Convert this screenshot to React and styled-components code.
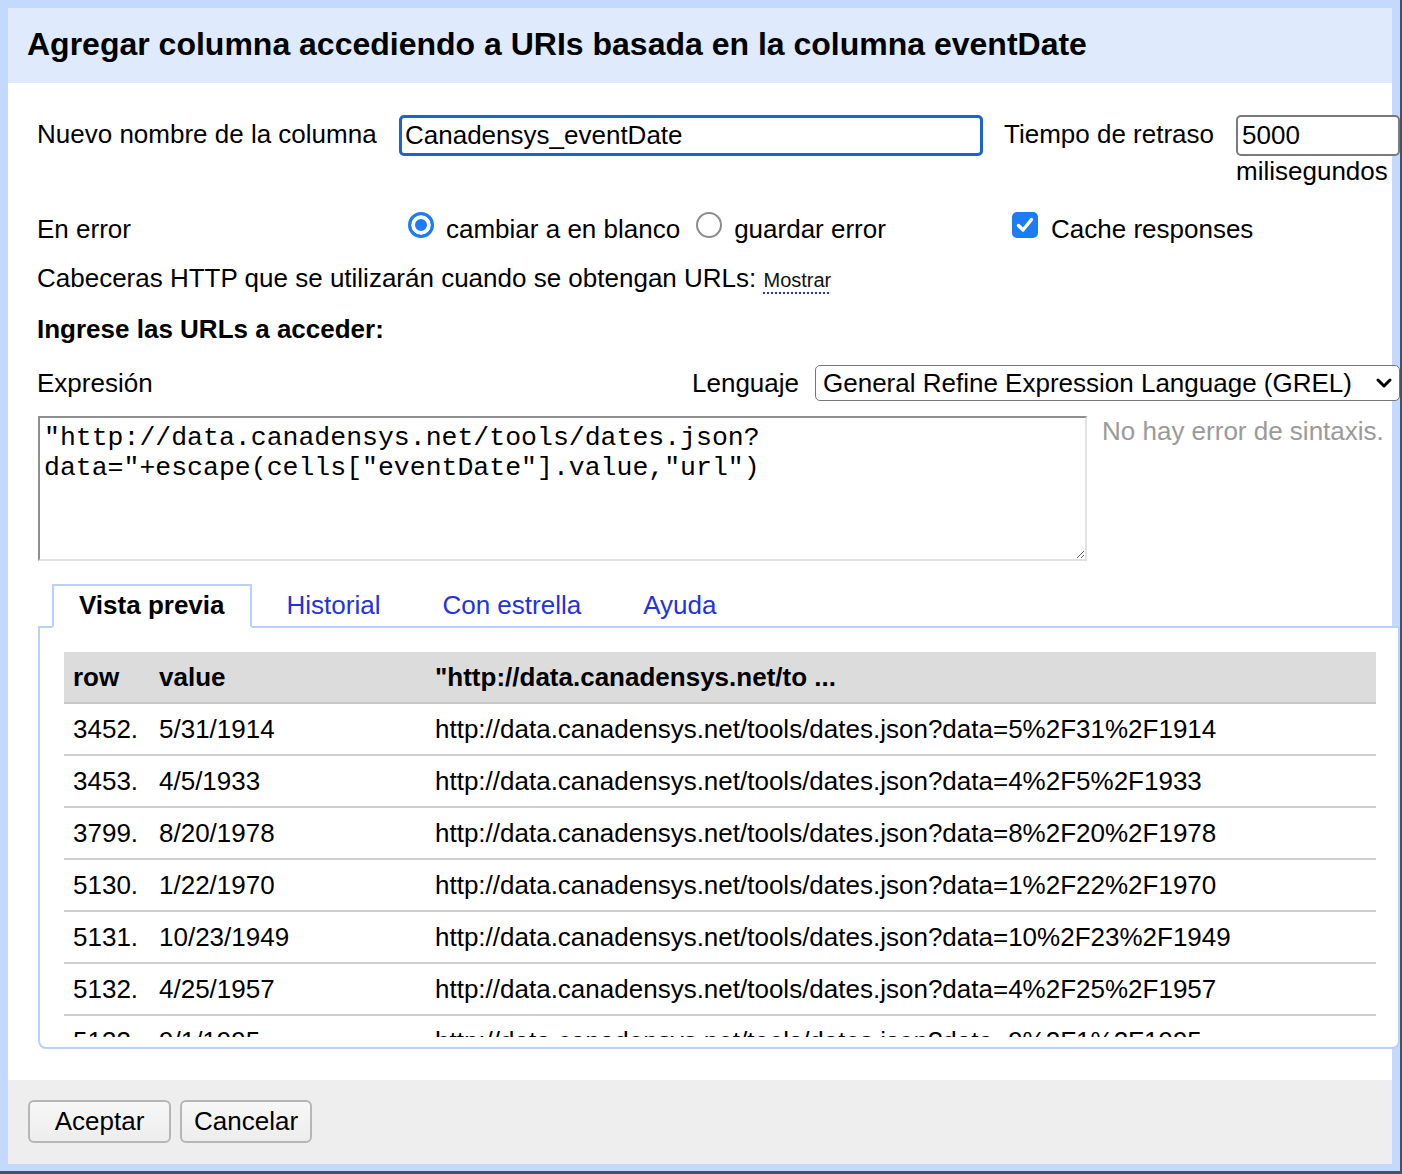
import React from "react";
import styled, { createGlobalStyle } from "styled-components";

const GlobalStyle = createGlobalStyle`
  html, body { margin: 0; padding: 0; }
  body {
    font-family: "Liberation Sans", Arial, sans-serif;
    color: #000;
    background: #fff;
  }
  * { box-sizing: border-box; }
`;

const Frame = styled.div`
  width: 1402px;
  height: 1174px;
  background: #c3d9fd;
  padding: 8px 8px 7px 8px;
  border-right: 2px solid #3b5470;
  border-bottom: 3px solid #3b5470;
  display: flex;
`;

const Dialog = styled.div`
  flex: 1;
  display: flex;
  flex-direction: column;
  background: #fff;
  overflow: visible;
`;

const Header = styled.div`
  height: 75px;
  flex: none;
  background: #dfeafc;
  padding: 0 0 3px 19px;
  font-size: 32px;
  font-weight: bold;
  line-height: 72px;
  white-space: nowrap;
`;

const Body = styled.div`
  flex: 1;
  min-height: 0;
  padding: 32px 0 0 29px;
  font-size: 26px;
`;

const Content = styled.div`
  margin-right: -8px;
`;

const FormGrid = styled.div`
  display: grid;
  grid-template-columns: 362px 605px 1fr;
  align-items: ${(p) => (p.center ? "center" : "start")};
  margin-top: ${(p) => p.mt || 0}px;
`;

const Label = styled.div`
  line-height: 38px;
  white-space: nowrap;
`;

const TextInput = styled.input`
  height: 41px;
  width: ${(p) => (p.width ? `${p.width}px` : "100%")};
  border: ${(p) => (p.focused ? "3px solid #1b63d0" : "2px solid #7a7a7a")};
  border-radius: 5px;
  padding: 0 ${(p) => (p.focused ? 3 : 4)}px;
  font-family: "Liberation Sans", Arial, sans-serif;
  font-size: 26px;
  color: #000;
  background: #fff;
  outline: none;
`;

const DelayCell = styled.div`
  display: flex;
  align-items: flex-start;
  gap: 22px;
`;

const DelayColumn = styled.div`
  flex: 1;
  display: flex;
  flex-direction: column;
`;

const Unit = styled.div`
  line-height: 30px;
`;

const OptionGroup = styled.div`
  display: flex;
  align-items: center;
  height: 38px;
`;

const OptionText = styled.span`
  line-height: 38px;
  white-space: nowrap;
  margin-right: ${(p) => p.mr || 0}px;
`;

const Radio = styled.span`
  flex: none;
  width: 26px;
  height: 26px;
  border-radius: 50%;
  margin: 0 12px 8px ${(p) => p.ml || 0}px;
  ${(p) =>
    p.checked
      ? `border: 3px solid #1d7cf5; background: #1d7cf5; box-shadow: inset 0 0 0 4px #fff;`
      : `border: 2px solid #8c8c8c; background: #fff;`}
`;

const CheckBox = styled.span`
  flex: none;
  width: 26px;
  height: 26px;
  border-radius: 5px;
  background: #1d7cf5;
  margin: 0 13px 8px 8px;
  display: flex;
  align-items: center;
  justify-content: center;
`;

const Line = styled.div`
  height: 38px;
  line-height: 38px;
  margin-top: ${(p) => p.mt || 0}px;
  font-weight: ${(p) => (p.bold ? "bold" : "normal")};
  white-space: nowrap;
`;

const DottedLink = styled.span`
  font-size: 20px;
  line-height: 1;
  color: #111;
  text-decoration: underline dotted #2233dd;
  text-decoration-thickness: 2px;
  text-underline-offset: 5px;
`;

const ExprRow = styled.div`
  display: flex;
  align-items: center;
  height: 36px;
  margin-top: 17px;
`;

const Grow = styled.div`
  flex: 1;
`;

const LangLabel = styled.span`
  margin-right: 16px;
`;

const SelectBox = styled.div`
  width: 585px;
  height: 36px;
  border: 1.5px solid #767676;
  border-radius: 5px;
  display: flex;
  align-items: center;
  justify-content: space-between;
  padding: 0 6px 0 7px;
  white-space: nowrap;
  background: #fff;
`;

const EditorRow = styled.div`
  display: flex;
  align-items: flex-start;
  margin-top: 15px;
  margin-left: 1px;
`;

const Expression = styled.textarea`
  display: block;
  width: 1049px;
  height: 145px;
  flex: none;
  border: 2px solid;
  border-color: #8f8f8f #e2e2e2 #e2e2e2 #8f8f8f;
  padding: 5px 4px;
  font-family: "Liberation Mono", "Courier New", monospace;
  font-size: 26.5px;
  line-height: 30px;
  color: #000;
  background: #fff;
  outline: none;
`;

const Status = styled.div`
  margin-left: 15px;
  line-height: 30px;
  color: #9a9a9a;
  white-space: nowrap;
`;

const TabBar = styled.div`
  display: flex;
  margin: 23px 0 -2px 15px;
`;

const Tab = styled.div`
  position: relative;
  z-index: ${(p) => (p.active ? 1 : 0)};
  height: 44px;
  padding: 0 25px;
  margin-right: 8px;
  border: 2px solid ${(p) => (p.active ? "#bcd1f7" : "transparent")};
  border-bottom: 2px solid ${(p) => (p.active ? "#fff" : "transparent")};
  background: ${(p) => (p.active ? "#fff" : "transparent")};
  line-height: 38px;
  font-weight: ${(p) => (p.active ? "bold" : "normal")};
  color: ${(p) => (p.active ? "#000" : "#2233dd")};
  white-space: nowrap;
`;

const Panel = styled.div`
  margin-left: 1px;
  border: 2px solid #bcd1f7;
  border-radius: 0 0 8px 8px;
  padding: 24px 22px 10px 24px;
  background: #fff;
`;

const Scroll = styled.div`
  height: 385px;
  overflow: hidden;
`;

const Table = styled.table`
  width: 100%;
  border-collapse: separate;
  border-spacing: 0;
  font-size: 26px;
`;

const Th = styled.th`
  background: #dcdcdc;
  border-bottom: 2px solid #c8c8c8;
  text-align: left;
  font-weight: bold;
  line-height: 50px;
  padding: 0 9px;
  white-space: nowrap;
  width: ${(p) => (p.w ? `${p.w}px` : "auto")};
`;

const Td = styled.td`
  border-bottom: 2px solid #cecece;
  line-height: 50px;
  padding: 0 9px;
  white-space: nowrap;
`;

const Footer = styled.div`
  height: 84px;
  flex: none;
  background: #eeeeee;
  padding: 20px;
  display: flex;
  align-items: flex-start;
  gap: 9px;
`;

const Button = styled.button`
  height: 43px;
  min-width: ${(p) => p.minW || 0}px;
  padding: 0 12px;
  border: 2px solid #b6b6b6;
  border-radius: 6px;
  background: linear-gradient(#f7f7f7, #ededed);
  font-family: "Liberation Sans", Arial, sans-serif;
  font-size: 26px;
  color: #000;
`;

const rows = [
  ["3452.", "5/31/1914", "5%2F31%2F1914"],
  ["3453.", "4/5/1933", "4%2F5%2F1933"],
  ["3799.", "8/20/1978", "8%2F20%2F1978"],
  ["5130.", "1/22/1970", "1%2F22%2F1970"],
  ["5131.", "10/23/1949", "10%2F23%2F1949"],
  ["5132.", "4/25/1957", "4%2F25%2F1957"],
  ["5133.", "9/1/1995", "9%2F1%2F1995"],
];

export default function App() {
  return (
    <>
      <GlobalStyle />
      <Frame>
        <Dialog>
          <Header>Agregar columna accediendo a URIs basada en la columna eventDate</Header>
          <Body>
            <Content>
              <FormGrid>
                <Label>Nuevo nombre de la columna</Label>
                <TextInput focused width={584} defaultValue="Canadensys_eventDate" />
                <DelayCell>
                  <Label>Tiempo de retraso</Label>
                  <DelayColumn>
                    <TextInput defaultValue="5000" />
                    <Unit>milisegundos</Unit>
                  </DelayColumn>
                </DelayCell>
              </FormGrid>

              <FormGrid center mt={24}>
                <Label>En error</Label>
                <OptionGroup>
                  <Radio checked ml={9} />
                  <OptionText mr={16}>cambiar a en blanco</OptionText>
                  <Radio />
                  <OptionText>guardar error</OptionText>
                </OptionGroup>
                <OptionGroup>
                  <CheckBox>
                    <svg width="20" height="20" viewBox="0 0 20 20">
                      <path d="M3.5 10.5 L8 15 L16.5 4.5" fill="none" stroke="#fff" strokeWidth="3.4" strokeLinecap="round" strokeLinejoin="round" />
                    </svg>
                  </CheckBox>
                  <OptionText>Cache responses</OptionText>
                </OptionGroup>
              </FormGrid>

              <Line mt={11}>
                Cabeceras HTTP que se utilizarán cuando se obtengan URLs: <DottedLink>Mostrar</DottedLink>
              </Line>
              <Line mt={13} bold>Ingrese las URLs a acceder:</Line>

              <ExprRow>
                <Grow>Expresión</Grow>
                <LangLabel>Lenguaje</LangLabel>
                <SelectBox>
                  <span>General Refine Expression Language (GREL)</span>
                  <svg width="18" height="12" viewBox="0 0 18 12">
                    <path d="M3 3 L9 9 L15 3" fill="none" stroke="#000" strokeWidth="3" strokeLinecap="round" strokeLinejoin="round" />
                  </svg>
                </SelectBox>
              </ExprRow>

              <EditorRow>
                <Expression
                  spellCheck={false}
                  defaultValue={'"http://data.canadensys.net/tools/dates.json?\u200Bdata="+escape(cells["eventDate"].value,"url")'}
                />
                <Status>No hay error de sintaxis.</Status>
              </EditorRow>

              <TabBar>
                <Tab active>Vista previa</Tab>
                <Tab>Historial</Tab>
                <Tab>Con estrella</Tab>
                <Tab>Ayuda</Tab>
              </TabBar>
              <Panel>
                <Scroll>
                  <Table>
                    <thead>
                      <tr>
                        <Th w={86}>row</Th>
                        <Th w={276}>value</Th>
                        <Th>"http://data.canadensys.net/to ...</Th>
                      </tr>
                    </thead>
                    <tbody>
                      {rows.map(([n, v, q]) => (
                        <tr key={n}>
                          <Td>{n}</Td>
                          <Td>{v}</Td>
                          <Td>{`http://data.canadensys.net/tools/dates.json?data=${q}`}</Td>
                        </tr>
                      ))}
                    </tbody>
                  </Table>
                </Scroll>
              </Panel>
            </Content>
          </Body>
          <Footer>
            <Button minW={143}>Aceptar</Button>
            <Button>Cancelar</Button>
          </Footer>
        </Dialog>
      </Frame>
    </>
  );
}
